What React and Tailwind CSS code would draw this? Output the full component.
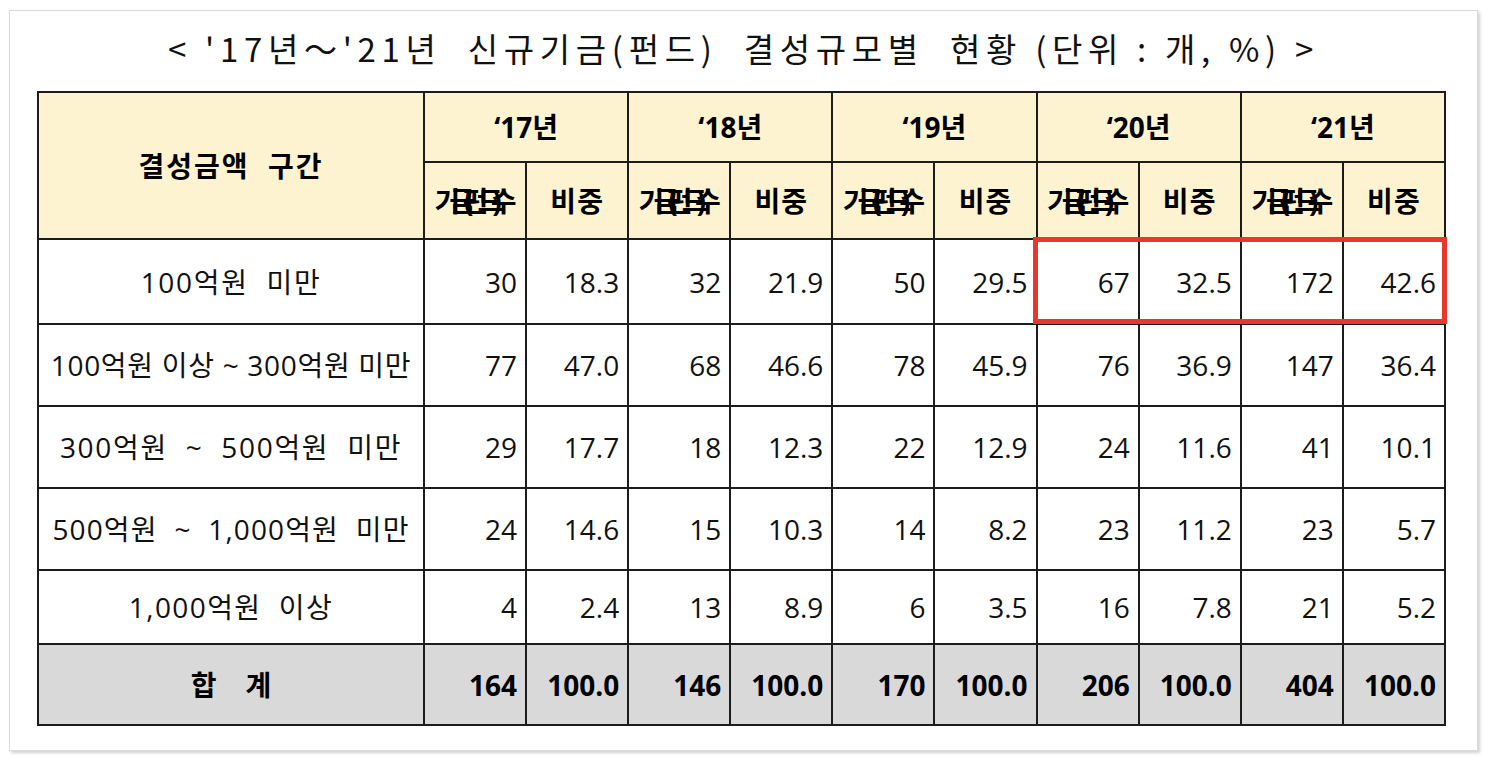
import React from "react";

const rows = [
  { label: "100억원  미만", track: "tracking-[0.06em]", h: "h-[85px]", v: ["30", "18.3", "32", "21.9", "50", "29.5", "67", "32.5", "172", "42.6"] },
  { label: "100억원 이상 ~ 300억원 미만", track: "tracking-[0.025em]", h: "h-[82px]", v: ["77", "47.0", "68", "46.6", "78", "45.9", "76", "36.9", "147", "36.4"] },
  { label: "300억원  ~  500억원  미만", track: "tracking-[0.06em]", h: "h-[82px]", v: ["29", "17.7", "18", "12.3", "22", "12.9", "24", "11.6", "41", "10.1"] },
  { label: "500억원  ~  1,000억원  미만", track: "tracking-[0.04em]", h: "h-[82px]", v: ["24", "14.6", "15", "10.3", "14", "8.2", "23", "11.2", "23", "5.7"] },
  { label: "1,000억원  이상", track: "tracking-[0.05em]", h: "h-[74px]", v: ["4", "2.4", "13", "8.9", "6", "3.5", "16", "7.8", "21", "5.2"] },
];

const totals = ["164", "100.0", "146", "100.0", "170", "100.0", "206", "100.0", "404", "100.0"];
const years = ["‘17년", "‘18년", "‘19년", "‘20년", "‘21년"];

const cell = "border-2 border-[#1c1c1c]";

export default function App() {
  return (
    <div className="min-h-screen bg-white pt-[10px] pl-[9px]">
      <div className="w-[1469px] h-[741px] border border-[#d9d9d9] bg-white shadow-[2px_2px_3px_rgba(0,0,0,0.18)]">
        <div className="h-[80px] pt-[17px]">
          <h1 className="text-center text-[33px] leading-[40px] tracking-[0.172em] text-[#111] font-normal whitespace-pre [font-family:'Noto_Sans_CJK_KR',sans-serif]">
            {"< '17년～'21년  신규기금(펀드)  결성규모별  현황 (단위 : 개, %) >"}
          </h1>
        </div>
        <div className="relative ml-[27px] w-[1409px]">
          <table className="w-[1409px] table-fixed border-collapse text-[28px] text-[#111] [font-family:'Open_Sans','Noto_Sans_CJK_KR',sans-serif]">
            <colgroup>
              <col className="w-[386px]" />
              {Array.from({ length: 10 }).map((_, i) => (
                <col key={i} />
              ))}
            </colgroup>
            <thead>
              <tr className="h-[70px] bg-[#fdf3d0]">
                <th rowSpan={2} className={`${cell} font-bold text-black tracking-[0.07em] whitespace-pre`}>
                  {"결성금액  구간"}
                </th>
                {years.map((y) => (
                  <th key={y} colSpan={2} className={`${cell} font-bold text-black`}>
                    {y}
                  </th>
                ))}
              </tr>
              <tr className="h-[77px] bg-[#fdf3d0]">
                {years.map((y) => (
                  <React.Fragment key={y}>
                    <th className={`${cell} font-bold text-black`}>
                      <span className="inline-block tracking-[-0.39em] pr-[10px]">기금(펀드)수</span>
                    </th>
                    <th className={`${cell} font-bold text-black tracking-[0.04em]`}>비중</th>
                  </React.Fragment>
                ))}
              </tr>
            </thead>
            <tbody>
              {rows.map((r) => (
                <tr key={r.label} className={r.h}>
                  <td className={`${cell} text-center whitespace-pre ${r.track}`}>{r.label}</td>
                  {r.v.map((x, i) => (
                    <td key={i} className={`${cell} text-right pr-[8px]`}>
                      {x}
                    </td>
                  ))}
                </tr>
              ))}
              <tr className="h-[81px] bg-[#d9d9d9]">
                <td className={`${cell} text-center font-bold text-black whitespace-pre`}>{"합    계"}</td>
                {totals.map((x, i) => (
                  <td key={i} className={`${cell} text-right pr-[8px] font-bold text-black`}>
                    {x}
                  </td>
                ))}
              </tr>
            </tbody>
          </table>
          <div className="pointer-events-none absolute left-[996px] top-[146px] w-[414px] h-[87px] border-[5px] border-[#e8372c]" />
        </div>
      </div>
    </div>
  );
}
